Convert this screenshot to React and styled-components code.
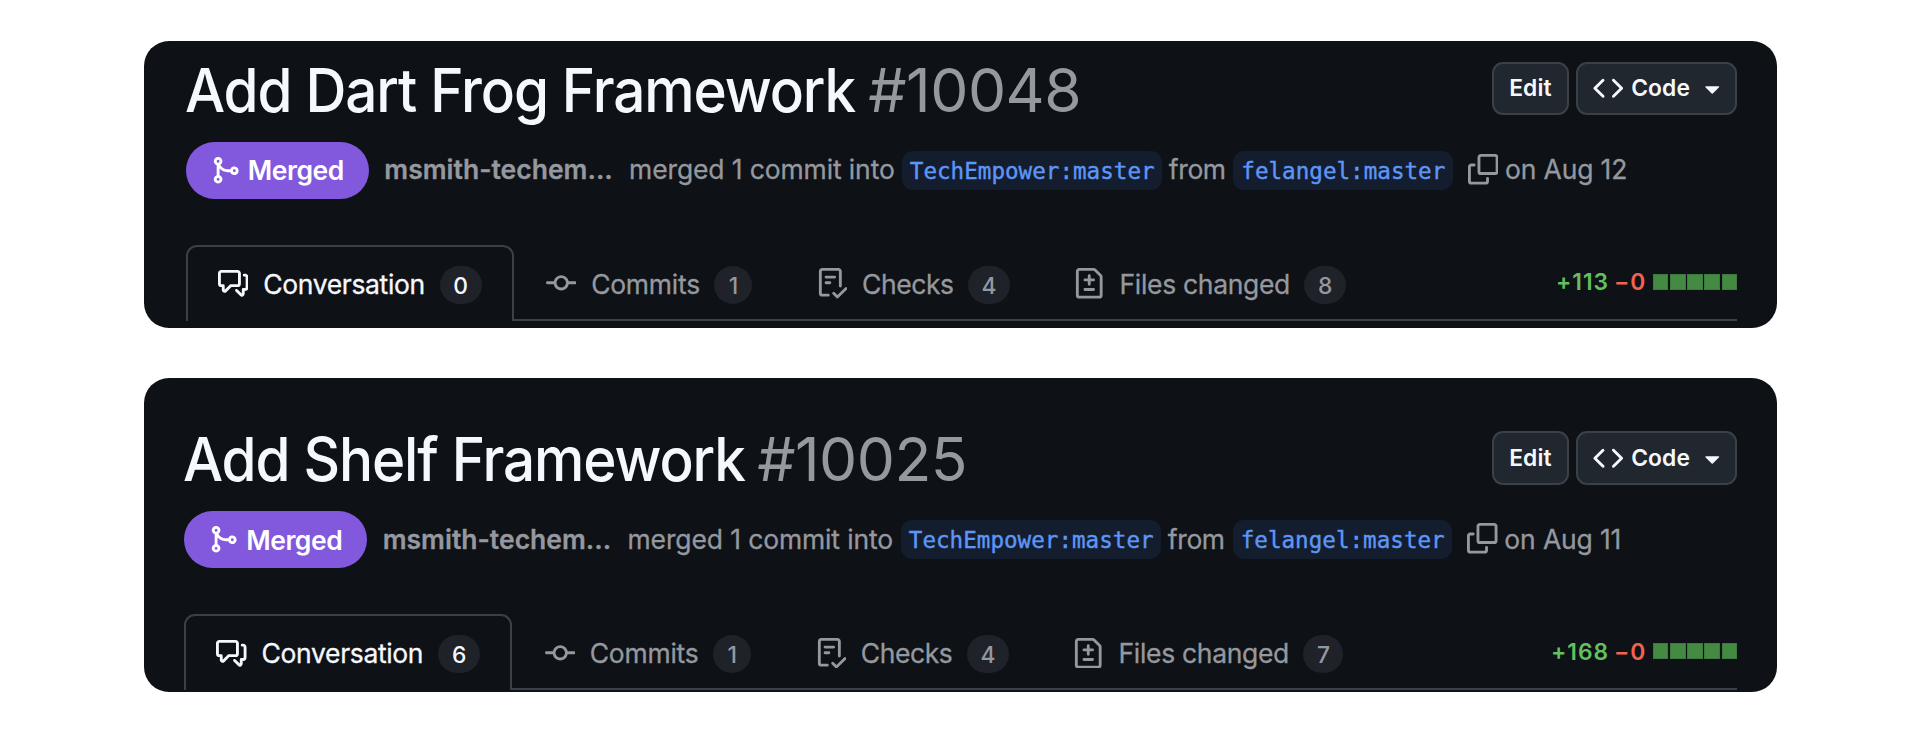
import React from 'react';
import styled, { createGlobalStyle } from 'styled-components';

const GlobalStyle = createGlobalStyle`
  * { box-sizing: border-box; }
  body {
    margin: 0;
    background: #fff;
    font-family: Inter, "Liberation Sans", sans-serif;
  }
  svg { display: block; flex: none; fill: currentColor; }
`;

const color = {
  canvas: '#0e1116',
  text: '#f5f8fd',
  muted: '#95989f',
  border: '#3c4047',
  merged: '#8259dd',
  link: '#5c96f7',
  linkBg: '#141d2d',
  counter: '#1f2229',
  button: '#21272e',
  add: '#63c05f',
  del: '#f3624f',
  block: '#458a43',
  blockEdge: '#3d7a3d',
};

const Page = styled.main`
  display: flex;
  flex-direction: column;
  gap: 50px;
  width: 1920px;
  height: 733px;
  padding: 41px 143px 0 144px;
`;

const Card = styled.article`
  display: flex;
  flex-direction: column;
  height: ${(p) => p.$height}px;
  padding: ${(p) => p.$top}px 40px 0 ${(p) => p.$left}px;
  border-radius: 25px;
  overflow: hidden;
  background: ${color.canvas};
`;

const Header = styled.header`
  display: flex;
  justify-content: space-between;
  height: 53.5px;
`;

const Title = styled.h1`
  display: flex;
  margin: 0 0 0 -1px;
  padding-top: 2px;
  color: ${color.text};
  font-size: 60.5px;
  font-weight: 500;
  line-height: 53px;
  white-space: nowrap;
`;

const TitleText = styled.span`
  width: ${(p) => p.$width}px;
  letter-spacing: -1.2px;
  transform: scaleX(0.937);
  transform-origin: left;
`;

const Number = styled.span`
  color: ${color.muted};
  font-weight: 400;
  letter-spacing: -0.5px;
`;

const Actions = styled.div`
  display: flex;
  gap: 7.5px;
`;

const Button = styled.button`
  display: flex;
  align-items: center;
  width: ${(p) => p.$width}px;
  height: 53.5px;
  padding: 0 ${(p) => (p.$icon ? 14.5 : 15.5)}px 0;
  border: 2px solid ${color.border};
  border-radius: 11px;
  background: ${color.button};
  color: ${color.text};
  font: 600 22.8px/30px Inter, sans-serif;
  letter-spacing: 0.1px;

  span { margin-left: ${(p) => (p.$icon ? 8 : 0)}px; }
  svg:last-child { margin-left: ${(p) => (p.$icon ? 7 : 0)}px; }
`;

const Meta = styled.div`
  display: flex;
  align-items: center;
  height: 57px;
  margin-top: 26.7px;
  color: ${color.muted};
  font-size: 26.5px;
  line-height: 34px;
  white-space: nowrap;
`;

const StateBadge = styled.span`
  display: flex;
  align-items: center;
  gap: 7.5px;
  width: 183px;
  height: 57.5px;
  padding-left: 24px;
  border-radius: 29px;
  background: ${color.merged};
  color: #fff;
  font-weight: 600;
  letter-spacing: -0.46px;
`;

const Phrase = styled.span`
  width: ${(p) => p.$width}px;
  margin-top: -2px;
  letter-spacing: ${(p) => p.$spacing || 0}px;
  -webkit-text-stroke: 0.3px currentColor;
`;

const Author = styled(Phrase)`
  margin-left: 15.5px;
  font-weight: 600;
`;

const Branch = styled.code`
  height: 39.5px;
  width: ${(p) => p.$width}px;
  padding-left: 8px;
  border-radius: 11px;
  background: ${color.linkBg};
  color: ${color.link};
  font: 22.6px/40px "DejaVu Sans Mono", monospace;
  -webkit-text-stroke: 0.4px currentColor;
`;

const CopyButton = styled.span`
  display: flex;
  margin: -2px 6.5px 0 15px;
`;

const Tabs = styled.nav`
  display: flex;
  align-items: stretch;
  height: 76px;
  margin-top: 45.8px;
  border-bottom: 2px solid ${color.border};
`;

const Tab = styled.a`
  display: flex;
  align-items: center;
  padding: 0 30.2px;
  margin-bottom: -2px;
  border: 2px solid ${(p) => (p.$active ? color.border : 'transparent')};
  border-bottom: 0;
  border-radius: 11px 11px 0 0;
  color: ${(p) => (p.$active ? color.text : color.muted)};
  background: ${(p) => (p.$active ? color.canvas : 'none')};
  font-size: 26.5px;
  line-height: 34px;
  white-space: nowrap;
`;

const TabLabel = styled.span`
  width: ${(p) => p.$width}px;
  margin-left: 14.7px;
  letter-spacing: ${(p) => p.$spacing}px;
  -webkit-text-stroke: 0.3px currentColor;
`;

const Counter = styled.span`
  width: ${(p) => p.$width}px;
  height: 38px;
  margin-top: 2px;
  border-radius: 19px;
  background: ${color.counter};
  font-size: 22.8px;
  font-weight: 500;
  line-height: 39px;
  text-align: center;
`;

const DiffStat = styled.div`
  display: flex;
  align-items: center;
  height: 74.5px;
  margin-left: auto;
  font-size: 22.8px;
  font-weight: 600;
  letter-spacing: 1px;
`;

const Added = styled.span`
  color: ${color.add};
`;

const Removed = styled.span`
  margin: 0 6.7px 0 4.9px;
  color: ${color.del};
`;

const Blocks = styled.span`
  display: grid;
  grid-template-columns: repeat(5, 15.4px);
  gap: 1.75px;
`;

const Block = styled.i`
  height: 15.5px;
  border: 1px solid ${color.blockEdge};
  background: ${color.block};
`;

const paths = {
  merge: 'M5.45 5.154A4.25 4.25 0 0 0 9.25 7.5h1.378a2.251 2.251 0 1 1 0 1.5H9.25A5.734 5.734 0 0 1 5 7.123v3.505a2.25 2.25 0 1 1-1.5 0V5.372a2.25 2.25 0 1 1 1.95-.218ZM4.25 13.5a.75.75 0 1 0 0-1.5.75.75 0 0 0 0 1.5Zm8.5-4.5a.75.75 0 1 0 0-1.5.75.75 0 0 0 0 1.5ZM5 3.25a.75.75 0 1 0 0 .005V3.25Z',
  discussion: 'M1.75 1h8.5c.966 0 1.75.784 1.75 1.75v5.5A1.75 1.75 0 0 1 10.25 10H7.061l-2.574 2.573A1.458 1.458 0 0 1 2 11.543V10h-.25A1.75 1.75 0 0 1 0 8.25v-5.5C0 1.784.784 1 1.75 1ZM1.5 2.75v5.5c0 .138.112.25.25.25h1a.75.75 0 0 1 .75.75v2.19l2.72-2.72a.749.749 0 0 1 .53-.22h3.5a.25.25 0 0 0 .25-.25v-5.5a.25.25 0 0 0-.25-.25h-8.5a.25.25 0 0 0-.25.25Zm13 2a.25.25 0 0 0-.25-.25h-.5a.75.75 0 0 1 0-1.5h.5c.966 0 1.75.784 1.75 1.75v5.5A1.75 1.75 0 0 1 14.25 12H14v1.543a1.458 1.458 0 0 1-2.487 1.03L9.22 12.28a.749.749 0 0 1 .326-1.275.749.749 0 0 1 .734.215l2.22 2.22v-2.19a.75.75 0 0 1 .75-.75h1a.25.25 0 0 0 .25-.25Z',
  commit: 'M11.93 8.5a4.002 4.002 0 0 1-7.86 0H.75a.75.75 0 0 1 0-1.5h3.32a4.002 4.002 0 0 1 7.86 0h3.32a.75.75 0 0 1 0 1.5Zm-1.43-.75a2.5 2.5 0 1 0-5 0 2.5 2.5 0 0 0 5 0Z',
  checklist: 'M2.5 1.75v11.5c0 .138.112.25.25.25h3.17a.75.75 0 0 1 0 1.5H2.75A1.75 1.75 0 0 1 1 13.25V1.75C1 .784 1.784 0 2.75 0h8.5C12.216 0 13 .784 13 1.75v7.736a.75.75 0 0 1-1.5 0V1.75a.25.25 0 0 0-.25-.25h-8.5a.25.25 0 0 0-.25.25Zm13.274 9.537v-.001l-4.557 4.45a.75.75 0 0 1-1.055-.008l-1.943-1.95a.75.75 0 0 1 1.062-1.058l1.419 1.425 4.026-3.932a.75.75 0 1 1 1.048 1.074ZM4.75 4h4.5a.75.75 0 0 1 0 1.5h-4.5a.75.75 0 0 1 0-1.5ZM4 7.75A.75.75 0 0 1 4.75 7h2a.75.75 0 0 1 0 1.5h-2A.75.75 0 0 1 4 7.75Z',
  diff: 'M1 1.75C1 .784 1.784 0 2.75 0h7.586c.464 0 .909.184 1.237.513l2.914 2.914c.329.328.513.773.513 1.237v9.586A1.75 1.75 0 0 1 13.25 16H2.75A1.75 1.75 0 0 1 1 14.25Zm1.75-.25a.25.25 0 0 0-.25.25v12.5c0 .138.112.25.25.25h10.5a.25.25 0 0 0 .25-.25V4.664a.25.25 0 0 0-.073-.177l-2.914-2.914a.25.25 0 0 0-.177-.073ZM8 3.25a.75.75 0 0 1 .75.75v1.5h1.5a.75.75 0 0 1 0 1.5h-1.5v1.5a.75.75 0 0 1-1.5 0V7h-1.5a.75.75 0 0 1 0-1.5h1.5V4A.75.75 0 0 1 8 3.25Zm-3 8a.75.75 0 0 1 .75-.75h4.5a.75.75 0 0 1 0 1.5h-4.5a.75.75 0 0 1-.75-.75Z',
  copy: 'M0 6.75C0 5.784.784 5 1.75 5h1.5a.75.75 0 0 1 0 1.5h-1.5a.25.25 0 0 0-.25.25v7.5c0 .138.112.25.25.25h7.5a.25.25 0 0 0 .25-.25v-1.5a.75.75 0 0 1 1.5 0v1.5A1.75 1.75 0 0 1 9.25 16h-7.5A1.75 1.75 0 0 1 0 14.25ZM5 1.75C5 .784 5.784 0 6.75 0h7.5C15.216 0 16 .784 16 1.75v7.5A1.75 1.75 0 0 1 14.25 11h-7.5A1.75 1.75 0 0 1 5 9.25Zm1.75-.25a.25.25 0 0 0-.25.25v7.5c0 .138.112.25.25.25h7.5a.25.25 0 0 0 .25-.25v-7.5a.25.25 0 0 0-.25-.25Z',
  code: 'm11.28 3.22 4.25 4.25a.75.75 0 0 1 0 1.06l-4.25 4.25a.749.749 0 0 1-1.275-.326.749.749 0 0 1 .215-.734L13.94 8l-3.72-3.72a.749.749 0 0 1 .326-1.275.749.749 0 0 1 .734.215Zm-6.56 0a.751.751 0 0 1 1.042.018.751.751 0 0 1 .018 1.042L2.06 8l3.72 3.72a.749.749 0 0 1-.326 1.275.749.749 0 0 1-.734-.215L.47 8.53a.75.75 0 0 1 0-1.06Z',
  caret: 'm4.427 7.427 3.396 3.396a.25.25 0 0 0 .354 0l3.396-3.396A.25.25 0 0 0 11.396 7H4.604a.25.25 0 0 0-.177.427Z',
};

const Icon = ({ name, size = 30.5 }) => (
  <svg width={size} height={size} viewBox="0 0 16 16" fillRule="evenodd" aria-hidden="true">
    <path d={paths[name]} />
  </svg>
);

const pulls = [
  {
    title: 'Add Dart Frog Framework', titleWidth: 683.5, number: '#10048',
    height: 287, top: 20.7, left: 41.8, intoWidth: 273, fromWidth: 64, date: 'on Aug 12', added: '+113',
    counts: [['0', 42], ['1', 38], ['4', 42], ['8', 42]], stretch: 0,
  },
  {
    title: 'Add Shelf Framework', titleWidth: 574, number: '#10025',
    height: 314, top: 53, left: 40.2, intoWidth: 273.6, fromWidth: 64.4, date: 'on Aug 11', added: '+168',
    counts: [['6', 42], ['1', 38], ['4', 42], ['7', 40]], stretch: 0.2,
  },
];

const tabs = [
  { label: 'Conversation', icon: 'discussion', width: 176.4, spacing: -0.35 },
  { label: 'Commits', icon: 'commit', width: 123.3, spacing: -0.25 },
  { label: 'Checks', icon: 'checklist', width: 106, spacing: -0.43 },
  { label: 'Files changed', icon: 'diff', width: 184.7, spacing: -0.32 },
];

const PullRequest = ({ pull }) => (
  <Card $height={pull.height} $top={pull.top} $left={pull.left}>
    <Header>
      <Title>
        <TitleText $width={pull.titleWidth}>{pull.title}</TitleText>
        <Number>{pull.number}</Number>
      </Title>
      <Actions>
        <Button $width={77}>Edit</Button>
        <Button $width={160.8} $icon>
          <Icon name="code" />
          <span>Code</span>
          <Icon name="caret" />
        </Button>
      </Actions>
    </Header>
    <Meta>
      <StateBadge>
        <Icon name="merge" />
        Merged
      </StateBadge>
      <Author $width={244.8}>msmith-techem...</Author>
      <Phrase $width={pull.intoWidth - 0.3} $spacing={-0.13}>merged 1 commit into</Phrase>
      <Branch $width={260}>TechEmpower:master</Branch>
      <Phrase $width={pull.fromWidth + 7.5} $spacing={-0.4}>&nbsp;from</Phrase>
      <Branch $width={219.7}>felangel:master</Branch>
      <CopyButton><Icon name="copy" /></CopyButton>
      <Phrase $width={130} $spacing={-0.15}>{pull.date}</Phrase>
    </Meta>
    <Tabs>
      {tabs.map((tab, i) => (
        <Tab key={tab.label} $active={i === 0}>
          <Icon name={tab.icon} />
          <TabLabel $width={tab.width + pull.stretch} $spacing={tab.spacing}>{tab.label}</TabLabel>
          <Counter $width={pull.counts[i][1]}>{pull.counts[i][0]}</Counter>
        </Tab>
      ))}
      <DiffStat>
        <Added>{pull.added}</Added>
        <Removed>−0</Removed>
        <Blocks>{[0, 1, 2, 3, 4].map((n) => <Block key={n} />)}</Blocks>
      </DiffStat>
    </Tabs>
  </Card>
);

export default function App() {
  return (
    <>
      <GlobalStyle />
      <Page>
        {pulls.map((pull) => <PullRequest key={pull.number} pull={pull} />)}
      </Page>
    </>
  );
}
